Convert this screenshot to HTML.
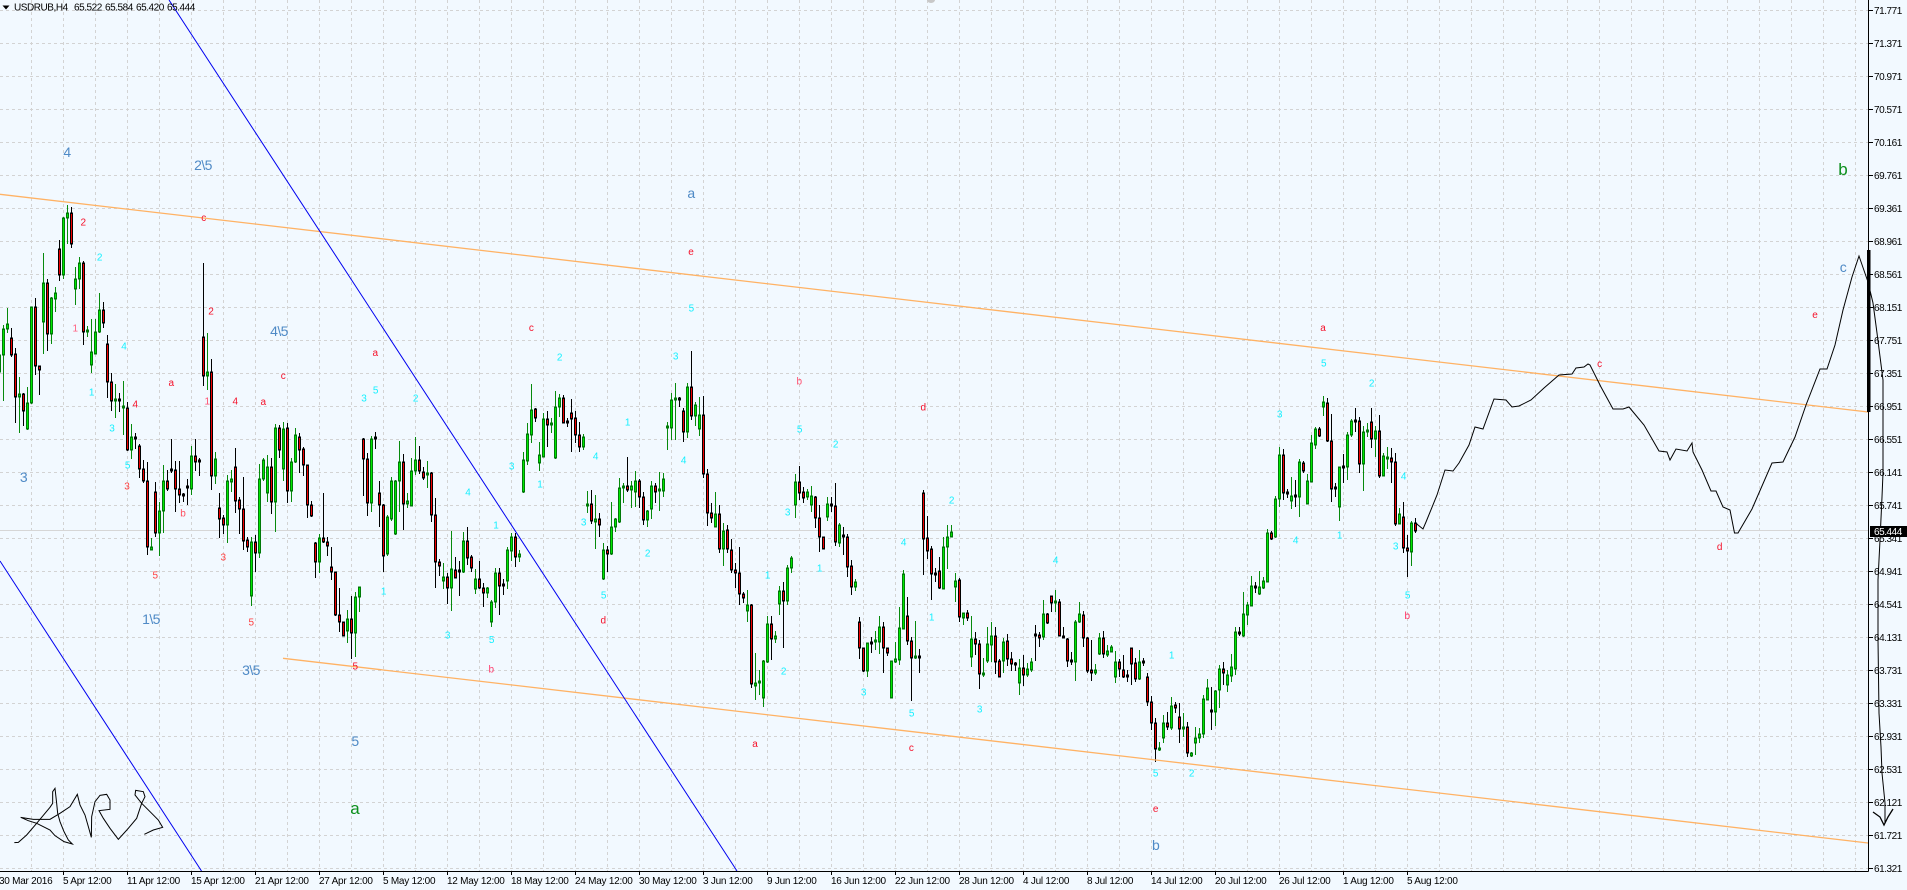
<!DOCTYPE html>
<html lang="en"><head><meta charset="utf-8"><title>USDRUB,H4</title>
<style>
html,body{margin:0;padding:0;background:#f2f9ff;overflow:hidden}
svg{display:block;position:absolute;left:0;top:0}
text{font-family:"Liberation Sans",sans-serif}
.t{font-size:10px;letter-spacing:-.45px;fill:#000}
.d{font-size:10px;letter-spacing:-.25px;fill:#000}
.c,.r{font-size:10px;text-anchor:middle}
.c{fill:#14f0ff}.r{fill:#f5112a}
.s{font-size:14px;fill:#4f8ac6;text-anchor:middle;letter-spacing:-.6px}
.g{font-size:17px;fill:#0c8f1c;text-anchor:middle}
</style></head><body>
<svg width="1907" height="890" viewBox="0 0 1907 890" xmlns="http://www.w3.org/2000/svg">
<rect width="1907" height="890" fill="#f2f9ff"/>
<!-- grid -->
<path shape-rendering="crispEdges" fill="none" stroke="#d3d3d3" stroke-dasharray="3 3" d="M0 10.5H1868M0 43.5H1868M0 76.5H1868M0 109.5H1868M0 142.5H1868M0 175.5H1868M0 208.5H1868M0 241.5H1868M0 274.5H1868M0 307.5H1868M0 340.5H1868M0 373.5H1868M0 406.5H1868M0 439.5H1868M0 472.5H1868M0 505.5H1868M0 538.5H1868M0 571.5H1868M0 604.5H1868M0 637.5H1868M0 670.5H1868M0 703.5H1868M0 736.5H1868M0 769.5H1868M0 802.5H1868M0 835.5H1868M0 868.5H1868"/>
<path shape-rendering="crispEdges" fill="none" stroke="#d3d3d3" stroke-dasharray="3 3" d="M31.5 0V871M63.5 0V871M95.5 0V871M127.5 0V871M159.5 0V871M191.5 0V871M223.5 0V871M255.5 0V871M287.5 0V871M319.5 0V871M351.5 0V871M383.5 0V871M415.5 0V871M447.5 0V871M479.5 0V871M511.5 0V871M543.5 0V871M575.5 0V871M607.5 0V871M639.5 0V871M671.5 0V871M703.5 0V871M735.5 0V871M767.5 0V871M799.5 0V871M831.5 0V871M863.5 0V871M895.5 0V871M927.5 0V871M959.5 0V871M991.5 0V871M1023.5 0V871M1055.5 0V871M1087.5 0V871M1119.5 0V871M1151.5 0V871M1183.5 0V871M1215.5 0V871M1247.5 0V871M1279.5 0V871M1311.5 0V871M1343.5 0V871M1375.5 0V871M1407.5 0V871M1439.5 0V871M1471.5 0V871M1503.5 0V871M1535.5 0V871M1567.5 0V871M1599.5 0V871M1631.5 0V871M1663.5 0V871M1695.5 0V871M1727.5 0V871M1759.5 0V871M1791.5 0V871M1823.5 0V871M1855.5 0V871"/>
<!-- bid line -->
<path shape-rendering="crispEdges" stroke="#d6d6d6" d="M0 530.5H1868"/>
<!-- green wicks -->
<path shape-rendering="crispEdges" fill="none" stroke="#078a0c" d="M-.5 320V372M3.5 325V401M7.5 308V333M19.5 377V433M27.5 387V430M31.5 307V404M43.5 253V354M51.5 297V344M55.5 287V312M63.5 217V279M67.5 205V244M75.5 267V305M79.5 257V289M87.5 326V337M91.5 319V373M95.5 319V354M99.5 293V333M115.5 384V418M123.5 381V435M131.5 424V459M151.5 538V550M159.5 502V556M163.5 465V533M191.5 446V495M207.5 333V390M215.5 452V484M227.5 475V543M231.5 470V492M251.5 537V606M259.5 464V558M263.5 458V481M267.5 455V502M275.5 424V532M283.5 422V481M291.5 458V502M295.5 428V463M319.5 534V573M347.5 610V643M355.5 592V657M359.5 587V612M371.5 436V512M387.5 515V556M391.5 477V521M395.5 480V535M399.5 441V512M407.5 493V508M411.5 458V506M415.5 437V475M427.5 461V488M443.5 563V589M451.5 531V611M463.5 532V573M475.5 569V594M487.5 587V598M491.5 600V627M495.5 568V608M507.5 547V589M511.5 533V561M519.5 550V562M523.5 452V493M527.5 423V465M531.5 384V443M539.5 442V471M543.5 413V457M551.5 418V433M555.5 391V459M559.5 394V417M583.5 434V450M587.5 491V513M595.5 495V549M603.5 543V580M611.5 502V555M615.5 518V532M619.5 478V523M623.5 483V503M631.5 481V508M635.5 471V507M647.5 510V527M651.5 481V519M659.5 472V511M663.5 473V497M667.5 422V450M671.5 393V440M675.5 383V440M687.5 383V438M695.5 402V426M699.5 397V436M715.5 492V527M723.5 523V566M747.5 590V622M755.5 653V700M759.5 670V695M763.5 660V707M767.5 616V663M775.5 631V643M779.5 586V615M787.5 565V605M791.5 556V573M795.5 474V518M807.5 489V500M811.5 486V512M827.5 497V521M839.5 523V547M855.5 579V591M867.5 643V677M875.5 631V650M879.5 616V654M891.5 661V698M895.5 642V663M899.5 607V665M903.5 570V629M915.5 621V659M943.5 537V589M947.5 525V569M951.5 525V537M955.5 573V602M963.5 613V625M971.5 616V667M983.5 658V677M987.5 627V663M991.5 622V662M1003.5 638V673M1019.5 659V695M1027.5 663V677M1031.5 658V672M1043.5 600V640M1055.5 590V612M1075.5 620V681M1079.5 602V623M1095.5 664V675M1099.5 633V655M1107.5 645V657M1111.5 645V652M1115.5 651V683M1139.5 650V680M1159.5 742V751M1163.5 715V743M1171.5 697V730M1183.5 713V737M1191.5 752V757M1195.5 727V755M1199.5 728V743M1203.5 695V738M1207.5 679V700M1215.5 690V726M1219.5 665V708M1227.5 670V692M1231.5 654V682M1235.5 627V675M1243.5 592V637M1247.5 602V625M1251.5 576V606M1259.5 571V595M1263.5 577V589M1267.5 529V582M1275.5 496V538M1279.5 447V507M1291.5 477V509M1299.5 459V517M1307.5 474V504M1311.5 435V482M1315.5 427V449M1323.5 396V416M1339.5 467V521M1347.5 432V480M1351.5 419V437M1363.5 426V491M1367.5 423V437M1375.5 426V457M1383.5 453V476M1387.5 447V469M1399.5 508V524M1411.5 521V566"/>
<!-- black wicks -->
<path shape-rendering="crispEdges" fill="none" stroke="#000" d="M11.5 328V357M15.5 348V423M23.5 393V426M35.5 298V375M39.5 366V395M47.5 279V351M59.5 240V281M71.5 207V248M83.5 261V345M103.5 302V328M107.5 335V398M111.5 373V411M119.5 393V412M127.5 402V451M135.5 433V449M139.5 444V478M143.5 460V483M147.5 462V555M155.5 482V537M167.5 470V491M171.5 439V473M175.5 461V512M179.5 461V503M183.5 493V502M187.5 479V505M195.5 439V471M199.5 458V476M203.5 263V386M211.5 359V490M219.5 493V538M223.5 515V534M235.5 448V513M239.5 497V534M243.5 477V550M247.5 537V552M255.5 535V572M271.5 458V514M279.5 425V458M287.5 423V503M299.5 433V473M303.5 447V476M307.5 465V518M311.5 501V517M315.5 542V578M323.5 493V543M327.5 537V556M331.5 547V580M335.5 572V616M339.5 588V632M343.5 622V636M351.5 596V659M363.5 438V496M367.5 453V516M375.5 432V449M379.5 481V527M383.5 504V572M403.5 454V530M419.5 446V474M423.5 467V480M431.5 472V522M435.5 498V588M439.5 559V576M447.5 573V604M455.5 557V578M459.5 561V596M467.5 527V565M471.5 555V572M479.5 561V589M483.5 583V607M499.5 568V615M503.5 579V595M515.5 533V567M535.5 408V422M547.5 411V447M563.5 395V423M567.5 418V427M571.5 399V452M575.5 411V443M579.5 422V452M591.5 490V524M599.5 513V537M607.5 546V572M627.5 457V492M639.5 479V508M643.5 492V525M655.5 483V503M679.5 397V407M683.5 408V442M691.5 351V420M703.5 396V478M707.5 469V526M711.5 503V523M719.5 505V553M727.5 525V553M731.5 539V573M735.5 563V588M739.5 547V605M743.5 592V603M751.5 604V688M771.5 616V660M783.5 582V648M799.5 466V500M803.5 487V503M815.5 496V528M819.5 505V552M823.5 537V549M831.5 497V512M835.5 483V546M843.5 527V555M847.5 534V577M851.5 560V595M859.5 617V659M863.5 648V672M871.5 637V653M883.5 622V673M887.5 648V656M907.5 597V645M911.5 637V701M919.5 649V673M923.5 490V575M927.5 516V559M931.5 546V600M935.5 568V582M939.5 557V589M959.5 578V622M967.5 610V621M975.5 632V655M979.5 640V689M995.5 627V674M999.5 659V677M1007.5 634V666M1011.5 652V671M1015.5 662V671M1023.5 655V686M1035.5 625V661M1039.5 632V647M1047.5 613V624M1051.5 596V612M1059.5 599V636M1063.5 627V638M1067.5 638V667M1071.5 652V665M1083.5 611V647M1087.5 637V673M1091.5 640V681M1103.5 631V658M1119.5 659V677M1123.5 655V678M1127.5 670V682M1131.5 648V685M1135.5 658V682M1143.5 658V666M1147.5 673V706M1151.5 696V730M1155.5 718V762M1167.5 712V730M1175.5 702V713M1179.5 703V743M1187.5 722V757M1211.5 687V730M1223.5 662V685M1239.5 627V636M1255.5 582V593M1271.5 531V540M1283.5 449V500M1287.5 489V498M1295.5 480V507M1303.5 461V473M1319.5 427V437M1327.5 398V442M1331.5 414V502M1335.5 483V497M1343.5 454V483M1355.5 408V432M1359.5 417V473M1371.5 408V448M1379.5 415V478M1391.5 448V483M1395.5 453V526M1403.5 502V553M1407.5 535V577M1415.5 518V533"/>
<defs>
<path id="gb" d="M-.5 356V371M3.5 330V354M7.5 325V328M19.5 395V396M27.5 404V428M31.5 308V402M43.5 284V321M51.5 299V333M55.5 294V298M63.5 219V274M67.5 214V217M75.5 280V288M79.5 264V278M87.5 331V331M91.5 353V364M95.5 333V353M99.5 311V331M115.5 400V400M123.5 407V407M131.5 438V449M151.5 548V549M159.5 512V532M163.5 482V510M191.5 457V488M207.5 373V375M215.5 460V475M227.5 482V524M231.5 480V481M251.5 543V595M259.5 480V552M263.5 461V478M267.5 468V492M275.5 429V501M283.5 430V468M291.5 463V490M295.5 436V461M319.5 539V561M347.5 620V630M355.5 598V632M359.5 588V596M371.5 440V502M387.5 518V553M391.5 482V518M395.5 482V533M399.5 463V480M407.5 502V503M411.5 472V505M415.5 461V470M427.5 474V474M443.5 578V580M451.5 570V587M463.5 542V571M475.5 580V588M487.5 589V592M491.5 603V621M495.5 574V601M507.5 551V580M511.5 538V550M519.5 555V556M523.5 461V491M527.5 435V460M531.5 411V434M539.5 456V462M543.5 420V456M551.5 424V424M555.5 408V457M559.5 399V406M583.5 438V446M587.5 505V505M595.5 520V521M603.5 551V578M611.5 528V553M615.5 520V526M619.5 489V521M623.5 487V487M631.5 487V489M635.5 482V491M647.5 512V519M651.5 487V508M659.5 490V490M663.5 480V490M667.5 427V427M671.5 401V427M675.5 399V399M687.5 388V431M695.5 406V415M699.5 416V428M715.5 515V526M723.5 532V548M747.5 606V610M755.5 684V685M759.5 682V682M763.5 662V697M767.5 625V661M775.5 637V638M779.5 592V603M787.5 569V600M791.5 559V567M795.5 483V504M807.5 493V496M811.5 497V504M827.5 505V516M839.5 526V542M855.5 583V586M867.5 644V670M875.5 641V641M879.5 628V641M891.5 662V697M895.5 660V661M899.5 629V659M903.5 575V628M915.5 657V657M943.5 548V588M947.5 538V546M951.5 533V536M955.5 582V586M963.5 614V617M971.5 640V656M983.5 674V674M987.5 645V660M991.5 637V644M1003.5 643V660M1019.5 669V682M1027.5 670V674M1031.5 663V669M1043.5 615V636M1055.5 602V602M1075.5 623V661M1079.5 615V621M1095.5 671V672M1099.5 639V653M1107.5 652V654M1111.5 648V651M1115.5 663V676M1139.5 663V678M1159.5 749V749M1163.5 724V737M1171.5 707V727M1183.5 728V728M1191.5 754V755M1195.5 739V742M1199.5 735V737M1203.5 700V733M1207.5 689V699M1215.5 692V711M1219.5 670V689M1227.5 676V684M1231.5 668V675M1235.5 633V668M1243.5 615V635M1247.5 606V614M1251.5 587V605M1259.5 588V593M1263.5 582V587M1267.5 534V581M1275.5 500V536M1279.5 456V498M1291.5 497V500M1299.5 463V496M1307.5 482V503M1311.5 444V481M1315.5 430V444M1323.5 403V406M1339.5 468V506M1347.5 436V466M1351.5 422V434M1363.5 433V463M1367.5 431V431M1375.5 432V438M1383.5 457V475M1387.5 458V458M1399.5 515V523M1411.5 524V551"/>
<path id="rb" d="M11.5 339V354M15.5 355V396M23.5 395V410M35.5 308V365M39.5 367V369M47.5 284V333M59.5 250V274M71.5 214V243M83.5 264V331M103.5 311V322M107.5 345V381M111.5 383V400M119.5 400V400M127.5 409V449M135.5 438V438M139.5 447V468M143.5 470V480M147.5 482V546M155.5 493V532M167.5 482V488M171.5 470V470M175.5 471V488M179.5 490V494M183.5 495V495M187.5 487V487M195.5 457V461M199.5 461V461M203.5 338V375M211.5 373V475M219.5 509V518M223.5 519V524M235.5 468V500M239.5 501V508M243.5 510V540M247.5 541V546M255.5 543V552M271.5 468V501M279.5 429V449M287.5 429V490M299.5 438V449M303.5 450V464M307.5 466V504M311.5 506V515M315.5 544V561M323.5 539V541M327.5 543V545M331.5 568V571M335.5 573V614M339.5 616V621M343.5 623V635M351.5 620V632M363.5 440V458M367.5 460V502M375.5 438V438M379.5 494V504M383.5 506V555M403.5 463V503M419.5 461V470M423.5 473V477M431.5 474V514M435.5 516V561M439.5 563V565M447.5 578V587M455.5 571V577M459.5 571V571M467.5 542V557M471.5 558V567M479.5 580V587M483.5 589V592M499.5 574V585M503.5 585V585M515.5 538V556M535.5 410V417M547.5 420V424M563.5 399V422M567.5 422V422M571.5 414V418M575.5 419V434M579.5 436V446M591.5 505V520M599.5 520V524M607.5 551V553M627.5 487V489M639.5 482V496M643.5 498V519M655.5 487V491M679.5 399V399M683.5 412V431M691.5 388V415M703.5 416V473M707.5 475V512M711.5 514V517M719.5 515V548M727.5 531V548M731.5 551V569M735.5 571V572M739.5 574V593M743.5 595V597M751.5 606V683M771.5 625V638M783.5 592V600M799.5 483V492M803.5 493V497M815.5 498V517M819.5 519V536M823.5 538V548M831.5 505V505M835.5 507V541M843.5 536V536M847.5 538V566M851.5 567V586M859.5 623V647M863.5 649V670M871.5 643V643M883.5 628V647M887.5 649V652M907.5 617V640M911.5 642V657M919.5 657V657M923.5 494V538M927.5 539V550M931.5 550V573M935.5 574V574M939.5 572V587M959.5 581V616M967.5 614V617M975.5 640V643M979.5 645V673M995.5 637V661M999.5 662V676M1007.5 642V658M1011.5 660V663M1015.5 664V664M1023.5 669V674M1035.5 635V635M1039.5 636V637M1047.5 615V622M1051.5 597V602M1059.5 603V635M1063.5 637V637M1067.5 640V660M1071.5 661V661M1083.5 616V637M1087.5 639V670M1091.5 671V672M1103.5 639V653M1119.5 663V668M1123.5 671V676M1127.5 676V676M1131.5 649V663M1135.5 664V678M1143.5 662V662M1147.5 678V701M1151.5 703V722M1155.5 724V748M1167.5 724V726M1175.5 706V707M1179.5 718V728M1187.5 728V752M1211.5 711V711M1223.5 670V672M1239.5 633V633M1255.5 587V587M1271.5 534V538M1283.5 456V492M1287.5 493V493M1295.5 496V496M1303.5 464V470M1319.5 430V435M1327.5 404V440M1331.5 442V488M1335.5 488V488M1343.5 467V467M1355.5 421V421M1359.5 422V463M1371.5 423V438M1379.5 432V475M1391.5 459V461M1395.5 463V523M1403.5 518V547M1407.5 549V550M1415.5 524V530"/>
</defs>
<g shape-rendering="crispEdges" fill="none">
<use href="#gb" stroke="#007a08" stroke-width="3" stroke-linecap="square"/>
<use href="#gb" stroke="#00e800" stroke-width="1"/>
<use href="#rb" stroke="#000" stroke-width="3" stroke-linecap="square"/>
<use href="#rb" stroke="#f00000" stroke-width="1"/>
</g>
<!-- trend lines -->
<path fill="none" stroke="#ffb264" stroke-width="1.3" d="M0 194.3L1868 412M283 658.3L1868 843"/>
<path fill="none" stroke="#0000f0" stroke-width="1" d="M169 0L737 871M0 561L201.5 871"/>
<!-- projection curve -->
<path fill="none" stroke="#000" stroke-width="1" d="M1416 523L1418 525L1423 529L1426 522L1437 495L1445 470L1453 471L1459 463L1469 445L1475 427L1483 429L1494 399L1506 400L1512 407L1519 406L1531 400L1544 388L1559 375L1572 374L1576 368L1584 367L1588 364L1590 365L1601 387L1613 409L1623 409L1629 407L1644 425L1659 451L1667 452L1670 460L1676 449L1687 451L1692 443L1693 452L1702 470L1711 491L1716 491L1723 507L1730 510L1734.5 533L1738 533L1752 509L1772 463L1783 462L1795 437L1806 405L1820 369L1827 369L1835 345L1843 310L1852 277L1859 256L1868 282L1873 303L1877 333L1883 380L1883 473L1882 497L1880 540L1878 580L1878 640L1879 713L1881 747L1882 773L1885 803L1885 823"/>
<path fill="none" stroke="#000" stroke-width="1.3" d="M1873 812L1880 817L1884 825L1888 817L1893 809"/>
<!-- signature -->
<g transform="translate(0 690) scale(.33333)"><path fill="none" stroke="#000" stroke-width="3" d="M43 458L55 457L80 435L110 400L150 352L158 340L158 305L165 295L170 340L173 370L180 395L192 425L205 450L217 462L192 455L165 437L150 420L110 400L85 392L62 382L100 388L150 388L180 370L210 350L232 313L240 345L255 375L265 410L274 442L275 380L285 335L300 316L320 313L330 330L330 358L297 362L310 385L330 415L355 448L385 415L410 385L425 340L405 315L407 301L430 305L435 320L425 340L455 370L475 390L488 412L460 420L433 433"/></g>
<!-- axes -->
<path shape-rendering="crispEdges" stroke="#000" fill="none" d="M1868.5 0V871.5M0 871.5H1868.5M1869 10.5h4M1869 43.5h4M1869 76.5h4M1869 109.5h4M1869 142.5h4M1869 175.5h4M1869 208.5h4M1869 241.5h4M1869 274.5h4M1869 307.5h4M1869 340.5h4M1869 373.5h4M1869 406.5h4M1869 439.5h4M1869 472.5h4M1869 505.5h4M1869 538.5h4M1869 571.5h4M1869 604.5h4M1869 637.5h4M1869 670.5h4M1869 703.5h4M1869 736.5h4M1869 769.5h4M1869 802.5h4M1869 835.5h4M1869 868.5h4M63.5 872v3M127.5 872v3M191.5 872v3M255.5 872v3M319.5 872v3M383.5 872v3M447.5 872v3M511.5 872v3M575.5 872v3M639.5 872v3M703.5 872v3M767.5 872v3M831.5 872v3M895.5 872v3M959.5 872v3M1023.5 872v3M1087.5 872v3M1151.5 872v3M1215.5 872v3M1279.5 872v3M1343.5 872v3M1407.5 872v3"/>
<rect x="1867" y="250" width="3.5" height="162" fill="#000"/>
<g class="t">
<text class="t" x="1874" y="14">71.771</text><text class="t" x="1874" y="47">71.371</text><text class="t" x="1874" y="80">70.971</text><text class="t" x="1874" y="113">70.571</text><text class="t" x="1874" y="146">70.161</text><text class="t" x="1874" y="179">69.761</text><text class="t" x="1874" y="212">69.361</text><text class="t" x="1874" y="245">68.961</text><text class="t" x="1874" y="278">68.561</text><text class="t" x="1874" y="311">68.151</text><text class="t" x="1874" y="344">67.751</text><text class="t" x="1874" y="377">67.351</text><text class="t" x="1874" y="410">66.951</text><text class="t" x="1874" y="443">66.551</text><text class="t" x="1874" y="476">66.141</text><text class="t" x="1874" y="509">65.741</text><text class="t" x="1874" y="542">65.341</text><text class="t" x="1874" y="575">64.941</text><text class="t" x="1874" y="608">64.541</text><text class="t" x="1874" y="641">64.131</text><text class="t" x="1874" y="674">63.731</text><text class="t" x="1874" y="707">63.331</text><text class="t" x="1874" y="740">62.931</text><text class="t" x="1874" y="773">62.531</text><text class="t" x="1874" y="806">62.121</text><text class="t" x="1874" y="839">61.721</text><text class="t" x="1874" y="872">61.321</text>
</g>
<rect x="1870" y="526" width="37" height="11" fill="#000"/>
<text class="t" x="1874" y="535" style="fill:#fff">65.444</text>
<!-- time axis -->
<text class="d" x="-1" y="884">30 Mar 2016</text><text class="d" x="63" y="884">5 Apr 12:00</text><text class="d" x="127" y="884">11 Apr 12:00</text><text class="d" x="191" y="884">15 Apr 12:00</text><text class="d" x="255" y="884">21 Apr 12:00</text><text class="d" x="319" y="884">27 Apr 12:00</text><text class="d" x="383" y="884">5 May 12:00</text><text class="d" x="447" y="884">12 May 12:00</text><text class="d" x="511" y="884">18 May 12:00</text><text class="d" x="575" y="884">24 May 12:00</text><text class="d" x="639" y="884">30 May 12:00</text><text class="d" x="703" y="884">3 Jun 12:00</text><text class="d" x="767" y="884">9 Jun 12:00</text><text class="d" x="831" y="884">16 Jun 12:00</text><text class="d" x="895" y="884">22 Jun 12:00</text><text class="d" x="959" y="884">28 Jun 12:00</text><text class="d" x="1023" y="884">4 Jul 12:00</text><text class="d" x="1087" y="884">8 Jul 12:00</text><text class="d" x="1151" y="884">14 Jul 12:00</text><text class="d" x="1215" y="884">20 Jul 12:00</text><text class="d" x="1279" y="884">26 Jul 12:00</text><text class="d" x="1343" y="884">1 Aug 12:00</text><text class="d" x="1407" y="884">5 Aug 12:00</text>
<!-- header -->
<path d="M2.5 5.5h7l-3.5 4z" fill="#000"/>
<text class="t" x="14" y="10.500">USDRUB,H4</text><text class="t" x="74" y="10.500">65.522</text><text class="t" x="105" y="10.500">65.584</text><text class="t" x="136" y="10.500">65.420</text><text class="t" x="167" y="10.500">65.444</text>
<ellipse cx="931" cy="0" rx="4" ry="3" fill="#c8c8c8"/>
<!-- wave labels: steel -->
<text class="s" x="67" y="157">4</text><text class="s" x="203" y="170">2\5</text><text class="s" x="23.5" y="482">3</text><text class="s" x="279" y="336">4\5</text><text class="s" x="151" y="624">1\5</text><text class="s" x="251" y="675">3\5</text><text class="s" x="355" y="746">5</text><text class="s" x="691" y="198">a</text><text class="s" x="1155.600" y="850">b</text><text class="s" x="1843" y="272">c</text>
<text class="g" x="355" y="814">a</text><text class="g" x="1843" y="175">b</text>
<!-- red labels -->
<text class="r" x="83.300" y="225.500">2</text><text class="r" x="203.700" y="221">c</text><text class="r" x="75.300" y="331.500" style="fill:#ff6080">1</text><text class="r" x="211" y="314.500">2</text><text class="r" x="207.300" y="404.500" style="fill:#ff5070">1</text><text class="r" x="235.300" y="404.500">4</text><text class="r" x="263.300" y="405">a</text><text class="r" x="283.300" y="379">c</text><text class="r" x="375.300" y="356">a</text><text class="r" x="171.300" y="386">a</text><text class="r" x="135.300" y="407.500">4</text><text class="r" x="127" y="489.500" style="fill:#ff4040">3</text><text class="r" x="183" y="516.500" style="fill:#ff5060">b</text><text class="r" x="223.300" y="560.500" style="fill:#ff4040">3</text><text class="r" x="155.300" y="578.500" style="fill:#ff4040">5</text><text class="r" x="251.300" y="625.500" style="fill:#ff4040">5</text><text class="r" x="355.300" y="669.500">5</text><text class="r" x="491.300" y="672.500" style="fill:#ff4070">b</text><text class="r" x="531.400" y="331">c</text><text class="r" x="603.300" y="623.500">d</text><text class="r" x="799.300" y="384.500" style="fill:#ff5070">b</text><text class="r" x="923.300" y="410.500">d</text><text class="r" x="691" y="255">e</text><text class="r" x="755" y="747">a</text><text class="r" x="911.400" y="751">c</text><text class="r" x="1155.600" y="812">e</text><text class="r" x="1323" y="331">a</text><text class="r" x="1407.300" y="619" style="fill:#ff3060">b</text><text class="r" x="1599.600" y="367">c</text><text class="r" x="1719.600" y="550">d</text><text class="r" x="1815" y="318">e</text>
<!-- cyan labels -->
<text class="c" x="99.700" y="260.500">2</text><text class="c" x="124" y="349.500">4</text><text class="c" x="91.700" y="395.500">1</text><text class="c" x="112" y="431.500">3</text><text class="c" x="127.700" y="468.500">5</text><text class="c" x="364" y="401.500">3</text><text class="c" x="375.700" y="393.500">5</text><text class="c" x="415.700" y="401.500">2</text><text class="c" x="468" y="495.500">4</text><text class="c" x="496" y="528.500">1</text><text class="c" x="383.700" y="594.500">1</text><text class="c" x="447.700" y="638.500">3</text><text class="c" x="491.700" y="643">5</text><text class="c" x="559.700" y="360.500">2</text><text class="c" x="675.700" y="359.500">3</text><text class="c" x="511.700" y="469.500">3</text><text class="c" x="540" y="487.500">1</text><text class="c" x="627.700" y="425.500">1</text><text class="c" x="595.700" y="459.500">4</text><text class="c" x="683.700" y="463.500">4</text><text class="c" x="583.700" y="525.500">3</text><text class="c" x="647.700" y="556.500">2</text><text class="c" x="603.700" y="598.500">5</text><text class="c" x="691.400" y="311.500">5</text><text class="c" x="799.700" y="432.500">5</text><text class="c" x="835.700" y="447.500">2</text><text class="c" x="787.700" y="515.500">3</text><text class="c" x="819.700" y="571.500">1</text><text class="c" x="767.700" y="578.500">1</text><text class="c" x="783.700" y="674.500">2</text><text class="c" x="863.700" y="695.500">3</text><text class="c" x="903.700" y="545.500">4</text><text class="c" x="911.700" y="716.500">5</text><text class="c" x="951.700" y="503.500">2</text><text class="c" x="931.700" y="620.500">1</text><text class="c" x="979.700" y="712.500">3</text><text class="c" x="1055.700" y="563.500">4</text><text class="c" x="1171.700" y="658.500">1</text><text class="c" x="1155.700" y="776.500">5</text><text class="c" x="1191.700" y="776.500">2</text><text class="c" x="1279.700" y="417.500">3</text><text class="c" x="1295.700" y="543.500">4</text><text class="c" x="1339.700" y="538.500">1</text><text class="c" x="1371.700" y="386.500">2</text><text class="c" x="1403.700" y="479.500">4</text><text class="c" x="1395.700" y="549.500">3</text><text class="c" x="1407.700" y="598.500">5</text><text class="c" x="1323.800" y="366.500">5</text>
</svg>
</body></html>
